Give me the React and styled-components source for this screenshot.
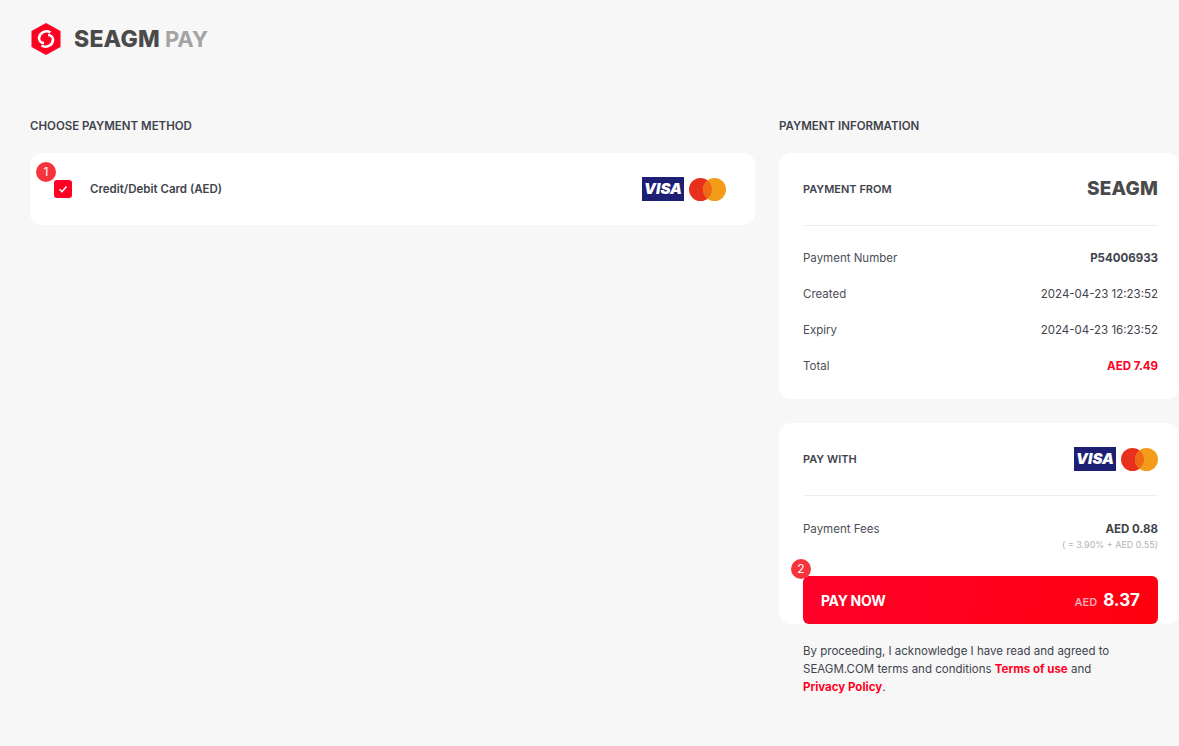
import React from 'react';
import styled, { createGlobalStyle } from 'styled-components';

const GlobalStyle = createGlobalStyle`
  html, body {
    margin: 0;
    padding: 0;
    background: #f7f7f7;
    overflow: hidden;
  }
  body {
    font-family: Inter, "Open Sans", sans-serif;
    color: #41434c;
  }
`;

const Page = styled.div`
  width: 1179px;
  height: 746px;
  overflow: hidden;
  box-sizing: border-box;
  padding: 22px 0 0 30px;
`;

const Brand = styled.header`
  display: flex;
  align-items: center;
  height: 34px;
  margin-bottom: 61px;
`;

const BrandName = styled.span`
  margin-left: 12px;
  font-size: 23px;
  line-height: 34px;
  font-weight: 800;
  letter-spacing: 0.2px;
  color: #4a4a4a;
`;

const BrandPay = styled.span`
  margin-left: 5px;
  font-size: 22px;
  line-height: 34px;
  font-weight: 700;
  color: #a3a3a3;
`;

const Columns = styled.main`
  display: grid;
  grid-template-columns: 725px 400px;
  column-gap: 24px;
  align-items: start;
`;

const SectionTitle = styled.h2`
  margin: 0 0 18px;
  font-size: 11.5px;
  line-height: 18px;
  font-weight: 600;
  color: #41434c;
`;

const Card = styled.section`
  position: relative;
  background: #fff;
  border-radius: 12px;
  padding: ${(p) => p.$padding || '0 21px 0 24px'};
  margin-bottom: 24px;
`;

const MethodCard = styled(Card)`
  display: flex;
  align-items: center;
  height: 72px;
  box-sizing: border-box;
  padding: 0 29px 0 24px;
`;

const Checkbox = styled.span`
  display: flex;
  align-items: center;
  justify-content: center;
  width: 18px;
  height: 18px;
  border-radius: 3px;
  background: #ff0022;
  margin-right: 18px;
  margin-top: 0;
`;

const MethodName = styled.span`
  flex: 1;
  font-size: 11.5px;
  font-weight: 600;
  color: #41434c;
`;

const Badge = styled.span`
  position: absolute;
  left: ${(p) => p.$left}px;
  top: ${(p) => p.$top}px;
  width: 20px;
  height: 20px;
  border-radius: 50%;
  background: #f7343d;
  color: #fff;
  font-size: 12px;
  line-height: 20px;
  text-align: center;
`;

const CardLogos = styled.div`
  display: flex;
  align-items: center;
  gap: 5px;
`;

const VisaMark = styled.span`
  display: block;
  width: 42px;
  height: 24px;
  background: #1d1f75;
  color: #fff;
  font-size: 15px;
  font-weight: 900;
  font-style: italic;
  line-height: 24px;
  text-align: center;
  letter-spacing: 0;
`;

const PanelHead = styled.div`
  display: flex;
  align-items: center;
  justify-content: space-between;
  height: 72px;
  border-bottom: 1px solid #eeeeee;
`;

const PanelTitle = styled.h3`
  margin: 0;
  font-size: 11px;
  font-weight: 600;
  color: #41434c;
`;

const SmallBrand = styled.span`
  font-size: 19px;
  font-weight: 800;
  line-height: 22px;
  letter-spacing: 0.2px;
  color: #4a4a4a;
`;

const InfoList = styled.div`
  padding: 14px 0 15px;
`;

const InfoRow = styled.div`
  display: flex;
  align-items: center;
  justify-content: space-between;
  height: 36px;
  font-size: 11.5px;
`;

const InfoLabel = styled.span`
  color: #4c4e57;
`;

const InfoValue = styled.span`
  color: ${(p) => (p.$red ? '#ff0022' : '#41434c')};
  font-weight: ${(p) => (p.$bold ? 700 : 400)};
`;

const Fees = styled.div`
  display: flex;
  justify-content: space-between;
  padding-top: 25px;
  height: 55px;
  font-size: 11.5px;
  line-height: 16px;
`;

const FeeAmount = styled.div`
  text-align: right;
  font-weight: 700;
  color: #41434c;
`;

const FeeNote = styled.div`
  font-size: 9px;
  line-height: 16px;
  font-weight: 400;
  color: #b3b3b3;
`;

const PayButton = styled.button`
  display: flex;
  align-items: center;
  justify-content: space-between;
  width: 355px;
  height: 48px;
  box-sizing: border-box;
  margin: 0 0 24px;
  padding: 0 18px;
  border: 0;
  border-radius: 6px;
  background: linear-gradient(100deg, #ff0029, #ff0010);
  color: #fff;
  font-family: inherit;
  cursor: pointer;
`;

const PayLabel = styled.span`
  font-size: 14px;
  font-weight: 700;
  letter-spacing: -0.3px;
`;

const PayAmount = styled.span`
  display: flex;
  align-items: baseline;
  gap: 6px;
  font-size: 17px;
  font-weight: 700;
`;

const PayCurrency = styled.span`
  font-size: 11px;
  font-weight: 600;
  color: #ffa6b0;
`;

const Terms = styled.p`
  margin: -6px 0 0 24px;
  width: 330px;
  font-size: 11.5px;
  line-height: 18px;
  color: #41434c;
`;

const TermsLink = styled.a`
  color: #ff0022;
  font-weight: 700;
  text-decoration: none;
`;

const HexLogo = () => (
  <svg width="32" height="34" viewBox="0 0 32 34" aria-hidden="true">
    <path d="M16 1 L30.5 9 V25 L16 33 L1.5 25 V9 Z" fill="#ff0022" />
    <path
      d="M20.5 10.5 A7.5 7.5 0 0 0 9 16 A5 5 0 0 0 14 21"
      fill="none"
      stroke="#fff"
      strokeWidth="2.6"
    />
    <path
      d="M11.5 23.5 A7.5 7.5 0 0 0 23 18 A5 5 0 0 0 18 13"
      fill="none"
      stroke="#fff"
      strokeWidth="2.6"
    />
  </svg>
);

const MasterMark = () => (
  <svg width="37" height="23" viewBox="0 0 37 23" aria-hidden="true">
    <circle cx="11.5" cy="11.5" r="11.5" fill="#e8301c" />
    <circle cx="25.5" cy="11.5" r="11.5" fill="#f39c1a" />
    <path d="M18.5 2.4 A11.5 11.5 0 0 1 18.5 20.6 A11.5 11.5 0 0 1 18.5 2.4 Z" fill="#ef6a14" />
  </svg>
);

const CheckMark = () => (
  <svg width="10" height="10" viewBox="0 0 10 10" aria-hidden="true">
    <path d="M1.5 5.2 L4 7.6 L8.5 2.6" fill="none" stroke="#fff" strokeWidth="1.5" />
  </svg>
);

const PaymentLogos = () => (
  <CardLogos>
    <VisaMark>VISA</VisaMark>
    <MasterMark />
  </CardLogos>
);

const App = () => {
  const details = [
    { label: 'Payment Number', value: 'P54006933', bold: true },
    { label: 'Created', value: '2024-04-23 12:23:52' },
    { label: 'Expiry', value: '2024-04-23 16:23:52' },
    { label: 'Total', value: 'AED 7.49', bold: true, red: true },
  ];

  return (
    <Page>
      <GlobalStyle />
      <Brand>
        <HexLogo />
        <BrandName>SEAGM</BrandName>
        <BrandPay>PAY</BrandPay>
      </Brand>
      <Columns>
        <div>
          <SectionTitle>CHOOSE PAYMENT METHOD</SectionTitle>
          <MethodCard>
            <Badge $left={6} $top={9}>1</Badge>
            <Checkbox>
              <CheckMark />
            </Checkbox>
            <MethodName>Credit/Debit Card (AED)</MethodName>
            <PaymentLogos />
          </MethodCard>
        </div>
        <div>
          <SectionTitle>PAYMENT INFORMATION</SectionTitle>
          <Card>
            <PanelHead>
              <PanelTitle>PAYMENT FROM</PanelTitle>
              <SmallBrand>SEAGM</SmallBrand>
            </PanelHead>
            <InfoList>
              {details.map((row) => (
                <InfoRow key={row.label}>
                  <InfoLabel>{row.label}</InfoLabel>
                  <InfoValue $bold={row.bold} $red={row.red}>{row.value}</InfoValue>
                </InfoRow>
              ))}
            </InfoList>
          </Card>
          <Card>
            <PanelHead>
              <PanelTitle>PAY WITH</PanelTitle>
              <PaymentLogos />
            </PanelHead>
            <Fees>
              <InfoLabel>Payment Fees</InfoLabel>
              <FeeAmount>
                AED 0.88
                <FeeNote>( = 3.90% + AED 0.55)</FeeNote>
              </FeeAmount>
            </Fees>
            <Badge $left={12} $top={136}>2</Badge>
            <PayButton>
              <PayLabel>PAY NOW</PayLabel>
              <PayAmount>
                <PayCurrency>AED</PayCurrency>
                8.37
              </PayAmount>
            </PayButton>
          </Card>
          <Terms>
            By proceeding, I acknowledge I have read and agreed to SEAGM.COM terms and
            conditions <TermsLink>Terms of use</TermsLink> and{' '}
            <TermsLink>Privacy Policy</TermsLink>.
          </Terms>
        </div>
      </Columns>
    </Page>
  );
};

export default App;
